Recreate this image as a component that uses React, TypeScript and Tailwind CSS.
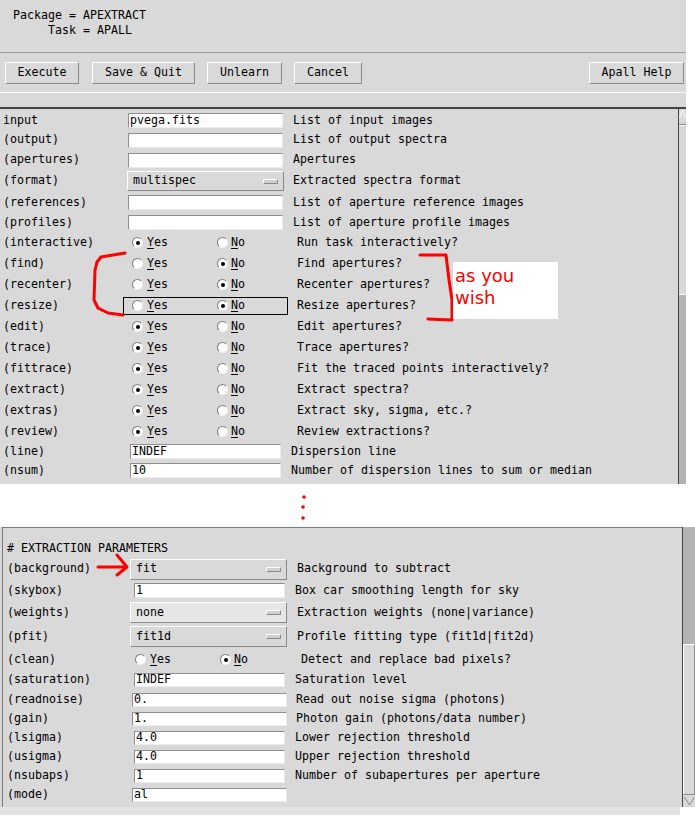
import React from "react";

type Row = {
  label: string;
  kind: "entry" | "menu" | "radio";
  value?: string;
  yes?: boolean;
  focus?: boolean;
  light?: boolean;
  desc: string;
  h: string; // row height
  lw: string; // label column width
  cw?: string; // control width
  ch?: string; // control height
  dm: string; // description margin
};

const topRows: Row[] = [
  { label: "input", kind: "entry", value: "pvega.fits", desc: "List of input images", h: "h-[19px]", lw: "w-[125px]", cw: "w-[155px]", ch: "h-[15px]", dm: "ml-[10px]" },
  { label: "(output)", kind: "entry", value: "", desc: "List of output spectra", h: "h-[20px]", lw: "w-[125px]", cw: "w-[155px]", ch: "h-[15px]", dm: "ml-[10px]" },
  { label: "(apertures)", kind: "entry", value: "", desc: "Apertures", h: "h-[20px]", lw: "w-[125px]", cw: "w-[155px]", ch: "h-[15px]", dm: "ml-[10px]" },
  { label: "(format)", kind: "menu", value: "multispec", desc: "Extracted spectra format", h: "h-[22px]", lw: "w-[124px]", cw: "w-[157px]", ch: "h-[20px]", dm: "ml-[9px]" },
  { label: "(references)", kind: "entry", value: "", desc: "List of aperture reference images", h: "h-[21px]", lw: "w-[125px]", cw: "w-[155px]", ch: "h-[15px]", dm: "ml-[10px]" },
  { label: "(profiles)", kind: "entry", value: "", desc: "List of aperture profile images", h: "h-[19px]", lw: "w-[125px]", cw: "w-[155px]", ch: "h-[15px]", dm: "ml-[10px]" },
  { label: "(interactive)", kind: "radio", yes: true, desc: "Run task interactively?", h: "h-[21px]", lw: "w-[120px]", dm: "ml-[9px]" },
  { label: "(find)", kind: "radio", yes: false, desc: "Find apertures?", h: "h-[21px]", lw: "w-[120px]", dm: "ml-[9px]" },
  { label: "(recenter)", kind: "radio", yes: false, desc: "Recenter apertures?", h: "h-[21px]", lw: "w-[120px]", dm: "ml-[9px]" },
  { label: "(resize)", kind: "radio", yes: false, focus: true, desc: "Resize apertures?", h: "h-[21px]", lw: "w-[120px]", dm: "ml-[9px]" },
  { label: "(edit)", kind: "radio", yes: true, desc: "Edit apertures?", h: "h-[21px]", lw: "w-[120px]", dm: "ml-[9px]" },
  { label: "(trace)", kind: "radio", yes: true, desc: "Trace apertures?", h: "h-[21px]", lw: "w-[120px]", dm: "ml-[9px]" },
  { label: "(fittrace)", kind: "radio", yes: true, desc: "Fit the traced points interactively?", h: "h-[21px]", lw: "w-[120px]", dm: "ml-[9px]" },
  { label: "(extract)", kind: "radio", yes: true, desc: "Extract spectra?", h: "h-[21px]", lw: "w-[120px]", dm: "ml-[9px]" },
  { label: "(extras)", kind: "radio", yes: true, desc: "Extract sky, sigma, etc.?", h: "h-[21px]", lw: "w-[120px]", dm: "ml-[9px]" },
  { label: "(review)", kind: "radio", yes: true, desc: "Review extractions?", h: "h-[21px]", lw: "w-[120px]", dm: "ml-[9px]" },
  { label: "(line)", kind: "entry", value: "INDEF", desc: "Dispersion line", h: "h-[19px]", lw: "w-[127px]", cw: "w-[151px]", ch: "h-[15px]", dm: "ml-[10px]" },
  { label: "(nsum)", kind: "entry", value: "10", desc: "Number of dispersion lines to sum or median", h: "h-[19px]", lw: "w-[127px]", cw: "w-[151px]", ch: "h-[15px]", dm: "ml-[10px]" },
];

const bottomRows: Row[] = [
  { label: "(background)", kind: "menu", value: "fit", desc: "Background to subtract", h: "h-[22px]", lw: "w-[123px]", cw: "w-[157px]", ch: "h-[21px]", dm: "ml-[10px]" },
  { label: "(skybox)", kind: "entry", value: "1", desc: "Box car smoothing length for sky", h: "h-[21px]", lw: "w-[127px]", cw: "w-[151px]", ch: "h-[15px]", dm: "ml-[10px]" },
  { label: "(weights)", kind: "menu", value: "none", light: true, desc: "Extraction weights (none|variance)", h: "h-[23px]", lw: "w-[123px]", cw: "w-[157px]", ch: "h-[21px]", dm: "ml-[10px]" },
  { label: "(pfit)", kind: "menu", value: "fit1d", desc: "Profile fitting type (fit1d|fit2d)", h: "h-[25px]", lw: "w-[123px]", cw: "w-[157px]", ch: "h-[21px]", dm: "ml-[10px]" },
  { label: "(clean)", kind: "radio", yes: false, desc: "Detect and replace bad pixels?", h: "h-[21px]", lw: "w-[119px]", dm: "ml-[10px]" },
  { label: "(saturation)", kind: "entry", value: "INDEF", desc: "Saturation level", h: "h-[20px]", lw: "w-[127px]", cw: "w-[151px]", ch: "h-[14px]", dm: "ml-[10px]" },
  { label: "(readnoise)", kind: "entry", value: "0.", desc: "Read out noise sigma (photons)", h: "h-[19px]", lw: "w-[125px]", cw: "w-[155px]", ch: "h-[14px]", dm: "ml-[9px]" },
  { label: "(gain)", kind: "entry", value: "1.", desc: "Photon gain (photons/data number)", h: "h-[19px]", lw: "w-[125px]", cw: "w-[155px]", ch: "h-[14px]", dm: "ml-[9px]" },
  { label: "(lsigma)", kind: "entry", value: "4.0", desc: "Lower rejection threshold", h: "h-[19px]", lw: "w-[127px]", cw: "w-[151px]", ch: "h-[14px]", dm: "ml-[10px]" },
  { label: "(usigma)", kind: "entry", value: "4.0", desc: "Upper rejection threshold", h: "h-[19px]", lw: "w-[127px]", cw: "w-[151px]", ch: "h-[14px]", dm: "ml-[10px]" },
  { label: "(nsubaps)", kind: "entry", value: "1", desc: "Number of subapertures per aperture", h: "h-[19px]", lw: "w-[127px]", cw: "w-[151px]", ch: "h-[14px]", dm: "ml-[10px]" },
  { label: "(mode)", kind: "entry", value: "al", desc: "", h: "h-[19px]", lw: "w-[125px]", cw: "w-[155px]", ch: "h-[14px]", dm: "ml-[9px]" },
];

function Radio({ on }: { on: boolean }) {
  return (
    <span className="w-[11px] h-[11px] shrink-0 rounded-full bg-white border border-t-[#7d7d7d] border-l-[#7d7d7d] border-r-[#f0f0f0] border-b-[#f0f0f0] flex items-center justify-center">
      {on && <span className="w-[4px] h-[4px] rounded-full bg-black" />}
    </span>
  );
}

function Control({ r }: { r: Row }) {
  if (r.kind === "entry") {
    return (
      <div
        className={`${r.cw} ${r.ch} shrink-0 bg-white border border-t-[#8e8e8e] border-l-[#8e8e8e] border-r-[#ececec] border-b-[#ececec] pl-px flex items-center leading-none`}
      >
        {r.value}
      </div>
    );
  }
  if (r.kind === "menu") {
    return (
      <div
        className={`${r.cw} ${r.ch} shrink-0 ${r.light ? "bg-[#e6e6e6]" : "bg-[#d9d9d9]"} border border-t-white border-l-white border-r-[#8a8a8a] border-b-[#8a8a8a] pl-[5px] pr-[5px] flex items-center justify-between`}
      >
        <span>{r.value}</span>
        <span className="w-[15px] h-[5px] bg-[#cfcfcf] border border-t-white border-l-white border-r-[#8a8a8a] border-b-[#8a8a8a]" />
      </div>
    );
  }
  return (
    <div
      className={`w-[165px] h-[18px] shrink-0 flex items-center pl-[8px] border ${
        r.focus ? "border-black" : "border-transparent"
      }`}
    >
      <span className="w-[85px] flex items-center gap-[4px]">
        <Radio on={!!r.yes} />
        <span>
          <span className="underline underline-offset-2">Y</span>es
        </span>
      </span>
      <span className="flex items-center gap-[3px]">
        <Radio on={!r.yes} />
        <span>
          <span className="underline underline-offset-2">N</span>o
        </span>
      </span>
    </div>
  );
}

function ParamRow({ r }: { r: Row }) {
  return (
    <div className={`${r.h} flex items-center whitespace-pre`}>
      <span className={`${r.lw} shrink-0`}>{r.label}</span>
      <Control r={r} />
      <span className={r.dm}>{r.desc}</span>
    </div>
  );
}

function Button({ label, w }: { label: string; w: string }) {
  return (
    <div
      className={`${w} h-[22px] shrink-0 flex items-center justify-center border border-t-white border-l-white border-r-[#8a8a8a] border-b-[#8a8a8a]`}
    >
      {label}
    </div>
  );
}

function Annotations() {
  return (
    <>
      <svg
        className="absolute left-0 top-0 pointer-events-none"
        width="695"
        height="821"
        viewBox="0 0 695 821"
      >
        <g fill="none" stroke="#ff0000" strokeWidth="3" strokeLinejoin="round" strokeLinecap="round">
          <path d="M125 253 L113 255 L101 257 L97 262 L95 270 L94 300 L98 308 L108 313 L123 315" />
          <path d="M420 255 L446 255 L449 280 L452 300 L452 320 L428 319" />
          <path d="M98 567 L125 567 M117 555 L127 567 L117 575" />
        </g>
        <g fill="#ff0000">
          <circle cx="304" cy="497" r="1.8" />
          <circle cx="303" cy="507" r="1.8" />
          <circle cx="303" cy="518" r="1.8" />
        </g>
      </svg>
      <div className="absolute left-[453px] top-[262px] w-[105px] h-[57px] bg-white pl-[2px] text-[#ff0000] font-['DejaVu_Sans',sans-serif] text-[18px] leading-[22px]">
        <div className="pt-[3px]">as you</div>
        <div>wish</div>
      </div>
    </>
  );
}

export default function App() {
  return (
    <div className="relative w-[695px] h-[821px] bg-white overflow-hidden text-black font-['DejaVu_Sans_Mono','Liberation_Mono',monospace] text-[11.63px]">
      {/* upper epar window */}
      <div className="w-[686px] h-[484px] bg-[#d9d9d9] flex flex-col">
        <div className="h-[52px] pt-[8px] pl-[13px] leading-[15px] whitespace-pre">
          <div>Package = APEXTRACT</div>
          <div>     Task = APALL</div>
        </div>
        <div className="h-px bg-[#9c9c9c]" />
        <div className="h-[39px] pt-[9px] pl-[5px] pr-[2px] flex items-start">
          <Button label="Execute" w="w-[74px]" />
          <div className="ml-[13px]">
            <Button label="Save & Quit" w="w-[103px]" />
          </div>
          <div className="ml-[12px]">
            <Button label="Unlearn" w="w-[75px]" />
          </div>
          <div className="ml-[12px]">
            <Button label="Cancel" w="w-[68px]" />
          </div>
          <div className="ml-auto">
            <Button label="Apall Help" w="w-[95px]" />
          </div>
        </div>
        <div className="h-px bg-white" />
        <div className="h-[14px]" />
        <div className="flex flex-1 min-h-0">
          <div className="w-[679px] border-t-2 border-r border-[#454545] pl-[3px] pt-[2px]">
            {topRows.map((r) => (
              <ParamRow key={r.label} r={r} />
            ))}
          </div>
          <div className="w-[7px] border-t-2 border-[#454545] flex flex-col">
            <div className="h-[16px] bg-[#d9d9d9] border-b border-[#8a8a8a] flex items-start justify-center">
              <svg width="7" height="10" viewBox="0 0 7 10">
                <path d="M0.5 9 L3.5 1 L6.5 9" fill="none" stroke="#ffffff" strokeWidth="1" />
              </svg>
            </div>
            <div className="h-[170px] bg-[#d9d9d9] border-t border-white border-b border-[#8a8a8a]" />
            <div className="flex-1 bg-[#b3b3b3]" />
          </div>
        </div>
      </div>

      {/* gap with ellipsis */}
      <div className="h-[43px]" />

      {/* lower epar window, scrolled */}
      <div className="flex h-[280px] w-[695px]">
        <div className="w-[682px] bg-[#d9d9d9] pl-[2px]">
          <div className="h-full border-l border-t border-[#7a7a7a] pl-[4px] pt-[12px]">
            <div className="h-[18px] flex items-center whitespace-pre"># EXTRACTION PARAMETERS</div>
            {bottomRows.map((r) => (
              <ParamRow key={r.label} r={r} />
            ))}
          </div>
        </div>
        <div className="w-[13px] border-l border-[#454545] flex flex-col">
          <div className="h-[117px] bg-[#b3b3b3]" />
          <div className="flex-1 bg-[#d9d9d9] border border-t-white border-l-white border-r-[#8a8a8a] border-b-[#8a8a8a]" />
          <div className="h-[12px] bg-[#d9d9d9] flex items-center justify-center">
            <svg width="11" height="10" viewBox="0 0 11 10">
              <path d="M0.5 1 L5.5 9 L10.5 1" fill="none" stroke="#8a8a8a" strokeWidth="1" />
            </svg>
          </div>
        </div>
      </div>
      <div className="w-[680px] h-[8px] bg-[#e3e3e3]" />

      <Annotations />
    </div>
  );
}
